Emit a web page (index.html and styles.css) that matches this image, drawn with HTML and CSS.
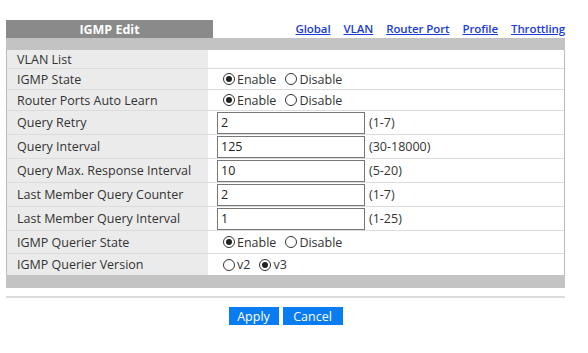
FILE: index.html
```html
<!DOCTYPE html>
<html>
<head>
<meta charset="utf-8">
<link rel="stylesheet" href="styles.css">
</head>
<body>
<div class="page">
  <div class="topbar">
    <div class="title">IGMP Edit</div>
    <nav class="links">
      <a href="#">Global</a>
      <a href="#">VLAN</a>
      <a href="#">Router Port</a>
      <a href="#">Profile</a>
      <a href="#">Throttling</a>
    </nav>
  </div>
  <div class="band"></div>
  <div class="table">
    <div class="row h18"><div class="lbl">VLAN List</div><div class="val"></div></div>
    <div class="row h21"><div class="lbl">IGMP State</div><div class="val"><span class="radio on"></span><span class="opt">Enable</span><span class="radio"></span><span class="opt">Disable</span></div></div>
    <div class="row h21"><div class="lbl">Router Ports Auto Learn</div><div class="val"><span class="radio on"></span><span class="opt">Enable</span><span class="radio"></span><span class="opt">Disable</span></div></div>
    <div class="row h24"><div class="lbl">Query Retry</div><div class="val"><span class="input">2</span><span class="range">(1-7)</span></div></div>
    <div class="row h24"><div class="lbl">Query Interval</div><div class="val"><span class="input">125</span><span class="range">(30-18000)</span></div></div>
    <div class="row h24"><div class="lbl">Query Max. Response Interval</div><div class="val"><span class="input">10</span><span class="range">(5-20)</span></div></div>
    <div class="row h24"><div class="lbl">Last Member Query Counter</div><div class="val"><span class="input">2</span><span class="range">(1-7)</span></div></div>
    <div class="row h24"><div class="lbl">Last Member Query Interval</div><div class="val"><span class="input">1</span><span class="range">(1-25)</span></div></div>
    <div class="row h23"><div class="lbl">IGMP Querier State</div><div class="val"><span class="radio on"></span><span class="opt">Enable</span><span class="radio"></span><span class="opt">Disable</span></div></div>
    <div class="row h21"><div class="lbl">IGMP Querier Version</div><div class="val"><span class="radio"></span><span class="opt">v2</span><span class="radio on"></span><span class="opt">v3</span></div></div>
  </div>
  <div class="band bottom"></div>
  <div class="rule"></div>
  <div class="buttons">
    <button class="btn apply">Apply</button>
    <button class="btn cancel">Cancel</button>
  </div>
</div>
</body>
</html>
```
FILE: styles.css
```css
html, body {
  margin: 0;
  padding: 0;
  background: #fff;
}
body {
  font-family: "Open Sans", "DejaVu Sans", sans-serif;
  font-size: 12.5px;
  color: #333;
}
.page {
  width: 559px;
  margin-left: 6px;
  padding-top: 20px;
}
.topbar {
  display: flex;
  align-items: stretch;
  height: 18px;
}
.title {
  width: 207px;
  background: #8a8a8a;
  color: #fff;
  font-weight: bold;
  font-size: 12.5px;
  display: flex;
  align-items: center;
  justify-content: center;
}
.links {
  flex: 1;
  display: flex;
  justify-content: flex-end;
  align-items: center;
  gap: 13px;
}
.links a {
  color: #1a3bd6;
  font-weight: 600;
  text-decoration: underline;
  font-size: 11.5px;
  letter-spacing: -0.1px;
  line-height: 1;
}
.band {
  height: 12px;
  background: #c3c3c3;
}
.band.bottom {
  height: 13px;
}
.table {
  border-left: 1px solid #bcbcbc;
  border-right: 1px solid #bcbcbc;
}
.row {
  display: flex;
  border-bottom: 1px solid #dcdcdc;
  box-sizing: border-box;
}
.row:last-child {
  border-bottom: none;
}
.h18 { height: 19px; }
.h21 { height: 21px; }
.h23 { height: 23px; }
.h24 { height: 24px; }
.lbl {
  width: 201px;
  background: #ebebeb;
  padding-left: 10px;
  box-sizing: border-box;
  display: flex;
  align-items: center;
}
.val {
  flex: 1;
  display: flex;
  align-items: center;
  padding-left: 9px;
}
.radio {
  width: 12px;
  height: 12px;
  box-sizing: border-box;
  border: 1px solid #333;
  border-radius: 50%;
  background: #fff;
  position: relative;
  margin-left: 9px;
}
.radio:first-child {
  margin-left: 6px;
}
.radio.on::after {
  content: "";
  position: absolute;
  left: 2px;
  top: 2px;
  width: 6px;
  height: 6px;
  border-radius: 50%;
  background: #222;
}
.opt {
  margin-left: 2px;
}
.input {
  width: 148px;
  height: 22px;
  box-sizing: border-box;
  border: 1px solid #777;
  background: #fff;
  padding-left: 3px;
  display: flex;
  align-items: center;
  color: #222;
}
.range {
  margin-left: 4px;
}
.rule {
  margin-top: 8px;
  height: 2px;
  background: #dcdcdc;
}
.buttons {
  display: flex;
  justify-content: center;
  gap: 4px;
  margin-top: 9px;
}
.btn {
  height: 18px;
  border: none;
  padding: 0;
  background: #0a7cf2;
  color: #fff;
  font-family: "Open Sans", "DejaVu Sans", sans-serif;
  font-size: 12.5px;
  cursor: pointer;
}
.apply { width: 50px; }
.cancel { width: 60px; }
```
